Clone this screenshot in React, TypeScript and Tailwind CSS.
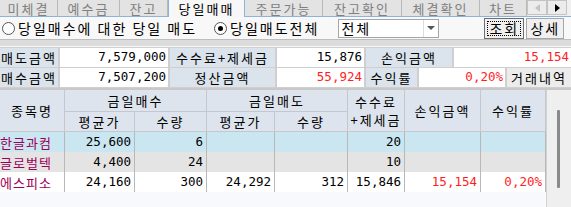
import React from 'react';

const KO = "font-['Noto_Sans_CJK_KR',sans-serif] text-[13px] tracking-[2px]";
const NUM = "font-['DejaVu_Sans_Mono','Noto_Sans_CJK_KR',monospace] text-[12.5px]";

const tabs = [
  { label: '미체결', w: 'w-[58px]', active: false },
  { label: '예수금', w: 'w-[62px]', active: false },
  { label: '잔고', w: 'w-[48px]', active: false },
  { label: '당일매매', w: 'w-[77px]', active: true },
  { label: '주문가능', w: 'w-[78px]', active: false },
  { label: '잔고확인', w: 'w-[79px]', active: false },
  { label: '체결확인', w: 'w-[78px]', active: false },
  { label: '차트', w: 'w-[47px]', active: false },
];

const rows = [
  {
    name: '한글과컴',
    bg: 'bg-[#c9e6f1]',
    cells: ['25,600', '6', '', '', '20', '', ''],
  },
  {
    name: '글로벌텍',
    bg: 'bg-[#e4e4e4]',
    cells: ['4,400', '24', '', '', '10', '', ''],
  },
  {
    name: '에스피소',
    bg: 'bg-white',
    cells: ['24,160', '300', '24,292', '312', '15,846', '15,154', '0,20%'],
  },
];

function Radio({ checked, label }: { checked?: boolean; label: string }) {
  return (
    <div className="flex items-center">
      <div className="w-[13px] h-[13px] rounded-full border border-[#555] bg-white flex items-center justify-center">
        {checked && <div className="w-[5px] h-[5px] rounded-full bg-black" />}
      </div>
      <span className={`${KO} ml-[3px] text-[14px] tracking-[1px] text-black leading-none whitespace-pre`}>{label}</span>
    </div>
  );
}

function Label({ w, children }: { w: string; children: React.ReactNode }) {
  return (
    <div className={`${w} bg-[#dbe3ec] flex items-center justify-center overflow-hidden whitespace-nowrap ${KO} text-black leading-none`}>
      {children}
    </div>
  );
}

function Value({ w, red, children }: { w: string; red?: boolean; children: React.ReactNode }) {
  return (
    <div className={`${w} bg-white flex items-center justify-end pr-[2px] ${NUM} leading-none ${red ? 'text-[#ff1e1e]' : 'text-black'}`}>
      {children}
    </div>
  );
}

export default function App() {
  const head = `bg-[#dde4ed] border-r border-b border-[#c4c8ce] flex items-center justify-center ${KO} text-black leading-none whitespace-nowrap`;

  return (
    <div className="w-[571px] h-[207px] overflow-hidden bg-[#f0f0f0] flex flex-col">
      {/* tabs */}
      <div className="h-[17px] flex shrink-0">
        {tabs.map((t) => (
          <div
            key={t.label}
            className={`${t.w} h-full flex items-center justify-center ${KO} leading-[15px] ${
              t.active
                ? 'bg-[#f7f7f7] text-black border-x border-[#8fb2dc]'
                : 'bg-[#e3e3e3] text-[#808080] border-r border-[#b9b9b9] border-b border-b-[#8fb2dc]'
            }`}
          >
            {t.label}
          </div>
        ))}
        <div className="flex-1 flex bg-[#f0f0f0] border-b border-[#8fb2dc]">
          <div className="w-[20px] h-[15px] border border-[#c4c4c4] bg-[#ececec] flex items-center justify-center">
            <svg width="5" height="8" viewBox="0 0 5 8">
              <path d="M5 0 L0 4 L5 8 Z" fill="#c4c4c4" />
            </svg>
          </div>
          <div className="w-[20px] h-[15px] border border-[#c4c4c4] bg-[#ececec] flex items-center justify-center">
            <svg width="5" height="8" viewBox="0 0 5 8">
              <path d="M0 0 L5 4 L0 8 Z" fill="#000" />
            </svg>
          </div>
        </div>
      </div>

      {/* radio row */}
      <div className="h-[23px] shrink-0 bg-[#f8f8f8] border-b border-[#bdbdbd] flex items-center pl-[2px]">
        <Radio label="당일매수에 대한 당일 매도" />
        <div className="ml-[17px]">
          <Radio checked label="당일매도전체" />
        </div>
        <div className="ml-[19px] w-[101px] h-[19px] bg-white border border-[#a5a5a5] flex">
          <span className={`${KO} text-[14px] tracking-[1px] flex-1 flex items-center pl-[2px] leading-none`}>전체</span>
          <div className="w-[15px] border-l border-[#dcdcdc] flex items-center justify-center">
            <svg width="8" height="4" viewBox="0 0 8 4">
              <path d="M0 0 L8 0 L4 4 Z" fill="#555" />
            </svg>
          </div>
        </div>
        <div className="ml-[45px] w-[40px] h-[21px] bg-[#f0f0f0] border border-[#6f6f6f] p-[2px]">
          <div className={`w-full h-full border border-dotted border-black flex items-center justify-center ${KO} text-[14px] tracking-[1px] leading-none`}>
            조회
          </div>
        </div>
        <div className={`ml-[2px] w-[38px] h-[21px] bg-[#f0f0f0] border border-[#a8a8a8] flex items-center justify-center ${KO} text-[14px] tracking-[1px] leading-none`}>
          상세
        </div>
      </div>

      {/* separator band */}
      <div className="h-[7px] shrink-0 bg-[#dcdcdc] border-b border-[#f8f8f8]" />

      {/* summary */}
      <div className="shrink-0 flex flex-col gap-px bg-[#cfcfcf] py-px">
        <div className="h-[19px] flex gap-[2px]">
          <Label w="w-[58px]">매도금액</Label>
          <Value w="w-[108px]">7,579,000</Value>
          <Label w="w-[105px]">수수료+제세금</Label>
          <Value w="w-[87px]">15,876</Value>
          <Label w="w-[86px]">손익금액</Label>
          <Value w="w-[117px]" red>15,154</Value>
        </div>
        <div className="h-[19px] flex gap-[2px]">
          <Label w="w-[58px]">매수금액</Label>
          <Value w="w-[108px]">7,507,200</Value>
          <Label w="w-[105px]">정산금액</Label>
          <Value w="w-[87px]" red>55,924</Value>
          <Label w="w-[51px]">수익률</Label>
          <Value w="w-[86px]" red>0,20%</Value>
          <div className={`w-[64px] bg-[#ececec] flex items-center justify-center ${KO} text-black leading-none whitespace-nowrap`}>
            거래내역
          </div>
        </div>
      </div>

      {/* table */}
      <div className="flex-1 flex border-t-[2px] border-[#c8c8c8]">
        <div className="w-[546px] flex flex-col bg-[#f7f9fc]">
          <div className="grid grid-cols-[65px_70px_72px_68px_73px_57px_76px_65px] grid-rows-[22px_20px]">
            <div className={`${head} row-span-2`}>종목명</div>
            <div className={`${head} col-span-2`}>금일매수</div>
            <div className={`${head} col-span-2`}>금일매도</div>
            <div className={`${head} row-span-2 flex-col text-[12px] tracking-[1px]`}>
              <span className="block leading-[18px]">수수료</span>
              <span className="block leading-[18px]">+제세금</span>
            </div>
            <div className={`${head} row-span-2`}>손익금액</div>
            <div className={`${head} row-span-2 bg-[#c7dcef]`}>수익률</div>
            <div className={head}>평균가</div>
            <div className={head}>수량</div>
            <div className={head}>평균가</div>
            <div className={head}>수량</div>
          </div>
          {rows.map((r) => (
            <div key={r.name} className={`grid grid-cols-[65px_70px_72px_68px_73px_57px_76px_65px] h-[20px] ${r.bg}`}>
              <div className={`border-r border-[#b8b8b8] flex items-center overflow-hidden whitespace-nowrap font-['Noto_Sans_CJK_KR',sans-serif] text-[13px] tracking-[1px] text-[#9c0058] leading-none`}>
                {r.name}
              </div>
              {r.cells.map((c, i) => (
                <div
                  key={i}
                  className={`border-r border-[#b8b8b8] flex items-center justify-end pr-[3px] ${NUM} leading-none ${
                    i >= 5 ? 'text-[#ff1e1e]' : 'text-black'
                  }`}
                >
                  {c}
                </div>
              ))}
            </div>
          ))}
        </div>
        <div className="flex-1 bg-[#efefef] border-l border-[#d2d2d2] pt-[20px] pl-[10px]">
          <div className="w-[3px] h-[78px] bg-[#8a8a8a] rounded-[1px]" />
        </div>
      </div>
    </div>
  );
}
